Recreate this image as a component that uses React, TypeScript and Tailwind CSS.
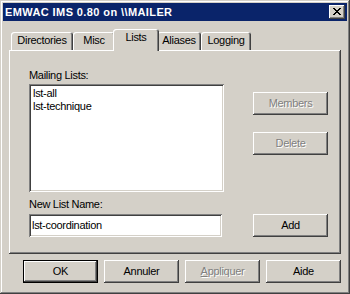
import type { ReactNode } from "react";

const RAISED =
  "shadow-[inset_-1px_-1px_#404040,inset_1px_1px_#fff,inset_-2px_-2px_#808080,inset_2px_2px_#d4d0c8]";
const SUNKEN =
  "shadow-[inset_1px_1px_#808080,inset_-1px_-1px_#fff,inset_2px_2px_#404040,inset_-2px_-2px_#d4d0c8]";

function CloseGlyph() {
  const rows: [number, number][][] = [
    [[0, 2], [6, 2]],
    [[1, 2], [5, 2]],
    [[2, 4]],
    [[3, 2]],
    [[2, 4]],
    [[1, 2], [5, 2]],
    [[0, 2], [6, 2]],
  ];
  return (
    <svg width="8" height="7" viewBox="0 0 8 7" shapeRendering="crispEdges">
      {rows.map((r, y) => r.map(([x, w]) => <rect key={`${y}-${x}`} x={x} y={y} width={w} height={1} fill="#000" />))}
    </svg>
  );
}

function Button({
  children,
  disabled,
  isDefault,
  className,
}: {
  children: ReactNode;
  disabled?: boolean;
  isDefault?: boolean;
  className?: string;
}) {
  const face = (
    <div
      className={`flex h-full w-full items-center justify-center bg-[#d4d0c8] ${RAISED} ${
        disabled ? "text-[#808080] [text-shadow:1px_1px_0_#fff]" : "text-black"
      }`}
    >
      {children}
    </div>
  );
  return (
    <div className={`h-[23px] w-[75px] ${isDefault ? "border border-black" : ""} ${className ?? ""}`}>{face}</div>
  );
}

function Tab({ label, width, selected }: { label: string; width: number; selected?: boolean }) {
  return (
    <div
      style={{ width }}
      className={`flex justify-center rounded-t-[3px] bg-[#d4d0c8] pt-[2px] shadow-[inset_1px_1px_#fff,inset_-1px_0_#404040,inset_-2px_0_#808080] ${
        selected ? "relative z-10 -mx-[2px] h-[22px]" : "mb-[1px] h-[18px]"
      }`}
    >
      {label}
    </div>
  );
}

export default function App() {
  return (
    <div className="h-[294px] w-[350px] bg-[#d4d0c8] p-[3px] font-['Liberation_Sans',Arial,sans-serif] text-[11px] leading-[13px] tracking-[-0.3px] text-black shadow-[inset_-1px_-1px_#404040,inset_1px_1px_#d4d0c8,inset_-2px_-2px_#808080,inset_2px_2px_#fff]">
      {/* title bar */}
      <div className="flex h-[18px] items-center bg-[#0a246a] pl-[2px] pr-[2px]">
        <span className="flex-1 text-[11px] font-bold tracking-[0.4px] text-white">EMWAC IMS 0.80 on \\MAILER</span>
        <div className={`flex h-[14px] w-[16px] items-start bg-[#d4d0c8] pl-[4px] pt-[3px] ${RAISED}`}>
          <CloseGlyph />
        </div>
      </div>

      {/* tab strip */}
      <div className="relative z-10 -mb-[1px] ml-[8px] mt-[8px] flex h-[22px] items-end">
        <Tab label="Directories" width={62} />
        <Tab label="Misc" width={42} />
        <Tab label="Lists" width={46} selected />
        <Tab label="Aliases" width={44} />
        <Tab label="Logging" width={50} />
      </div>

      {/* tab page */}
      <div className="ml-[6px] flex h-[204px] w-[332px] flex-col pl-[20px] pt-[19px] shadow-[inset_-1px_-1px_#404040,inset_1px_1px_#fff,inset_-2px_-2px_#808080]">
        <div className="flex">
          <div className="flex w-[195px] flex-col">
            <div className="mb-[2px]">Mailing Lists:</div>
            <div className={`h-[108px] bg-white pl-[4px] pt-[3px] ${SUNKEN}`}>
              <div>lst-all</div>
              <div>lst-technique</div>
            </div>
          </div>
          <div className="ml-[29px] flex flex-col pt-[23px]">
            <Button disabled>Members</Button>
            <Button disabled className="mt-[17px]">
              Delete
            </Button>
          </div>
        </div>
        <div className="mt-[6px] mb-[3px]">New List Name:</div>
        <div className="flex">
          <div className={`flex h-[23px] w-[193px] items-center bg-white pl-[3px] ${SUNKEN}`}>lst-coordination</div>
          <Button className="ml-[31px]">Add</Button>
        </div>
      </div>

      {/* dialog buttons */}
      <div className="mt-[6px] ml-[20px] flex gap-[6px]">
        <Button isDefault>OK</Button>
        <Button>Annuler</Button>
        <Button disabled>
          <span>
            <span className="underline">A</span>ppliquer
          </span>
        </Button>
        <Button>Aide</Button>
      </div>
    </div>
  );
}
